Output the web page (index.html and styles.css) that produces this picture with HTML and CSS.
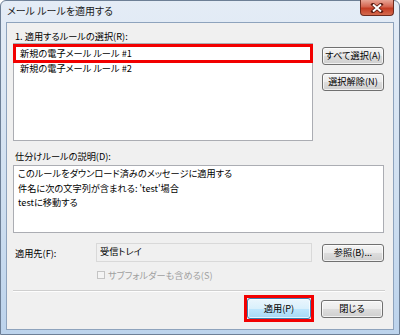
FILE: index.html
```html
<!DOCTYPE html>
<html lang="ja">
<head>
  <meta charset="UTF-8">
  <title>メール ルールを適用する</title>
  <link rel="stylesheet" href="styles.css">
</head>
<body>
  <div class="window">
    <div class="titlebar">
      <span class="title">メール ルールを適用する</span>
      <div class="close-btn">
        <svg width="14" height="10" viewBox="0 0 14 10">
          <path d="M3 1.5 L11 8.5 M11 1.5 L3 8.5" stroke="#5a1a10" stroke-width="3.6" stroke-linecap="square"/>
          <path d="M3 1.5 L11 8.5 M11 1.5 L3 8.5" stroke="#ffffff" stroke-width="2"/>
        </svg>
      </div>
    </div>
    <div class="client">
      <div class="label label-first">1. 適用するルールの選択(R):</div>
      <div class="rules-row">
        <div class="listbox">
          <div class="list-item">新規の電子メール ルール #1</div>
          <div class="list-item">新規の電子メール ルール #2</div>
          <div class="mark mark-rule"></div>
        </div>
        <div class="side-buttons">
          <div class="btn">すべて選択(A)</div>
          <div class="btn">選択解除(N)</div>
        </div>
      </div>

      <div class="label label-desc">仕分けルールの説明(D):</div>
      <div class="desc-box">
        <div>このルールをダウンロード済みのメッセージに適用する</div>
        <div>件名に次の文字列が含まれる: 'test'場合</div>
        <div>testに移動する</div>
      </div>

      <div class="dest-row">
        <div class="dest-label">適用先(F):</div>
        <div class="dest-field">受信トレイ</div>
        <div class="btn">参照(B)...</div>
      </div>
      <div class="check-row">
        <span class="checkbox"></span>
        <span>サブフォルダーも含める(S)</span>
      </div>

      <div class="separator"></div>

      <div class="footer">
        <div class="apply-wrap">
          <div class="btn btn-default">適用(P)</div>
          <div class="mark mark-apply"></div>
        </div>
        <div class="btn">閉じる</div>
      </div>
    </div>
  </div>
</body>
</html>
```

FILE: styles.css
```css
*{
  margin: 0;
  padding: 0;
  box-sizing: border-box;
}
body{
  width: 400px;
  height: 335px;
  overflow: hidden;
  font-family: "Noto Sans CJK JP", "Liberation Sans", sans-serif;
  font-size: 9.2px;
  font-feature-settings: "palt";
  color: #000;
  background: #fff;
}
.window{
  width: 400px;
  height: 335px;
  background: linear-gradient(#e4ecf6, #cfdff0 60%, #bcd3ec);
  border: 1px solid #6d7f96;
  border-radius: 6px 6px 0 0;
  display: flex;
  flex-direction: column;
}
.titlebar{
  height: 21px;
  display: flex;
  align-items: flex-start;
  justify-content: space-between;
  padding-left: 6px;
}
.title{
  line-height: 20px;
  font-size: 10px;
  color: #1b1b1b;
}
.close-btn{
  width: 34px;
  height: 16px;
  margin-right: 5px;
  margin-top: -1px;
  background: linear-gradient(#e8a596, #d5644f 45%, #c43c23 55%, #d46a4e);
  border: 1px solid #6e2b1f;
  border-top: none;
  border-radius: 0 0 4px 4px;
  display: flex;
  align-items: center;
  justify-content: center;
}
.client{
  margin: 0 5px 4px 5px;
  flex: 1;
  background: #f0f0f0;
  border: 1px solid #8ea3bd;
  padding: 6px 8px 0 6px;
  display: flex;
  flex-direction: column;
}
.label{
  line-height: 14px;
  padding-left: 2px;
}
.rules-row{
  display: flex;
}
.listbox{
  position: relative;
  width: 300px;
  height: 98px;
  background: #fff;
  border: 1px solid #abadb3;
  padding: 2px 0 0 6px;
}
.list-item{
  line-height: 15px;
}
.mark{
  position: absolute;
  border: 3px solid #f20000;
}
.mark-rule{
  left: -1px;
  top: 0px;
  width: 300px;
  height: 19px;
}
.side-buttons{
  margin-left: 9px;
  margin-top: 4px;
  display: flex;
  flex-direction: column;
  gap: 8px;
}
.btn{
  width: 62px;
  height: 18px;
  border: 1px solid #707070;
  border-radius: 3px;
  background: linear-gradient(#f4f4f4, #ebebeb 50%, #dddddd 51%, #cfcfcf);
  box-shadow: inset 0 0 0 1px rgba(255,255,255,0.7);
  display: flex;
  align-items: center;
  justify-content: center;
  line-height: 1;
  white-space: nowrap;
}
.label-desc{
  margin-top: 8px;
}
.desc-box{
  margin-top: 2px;
  width: 371px;
  height: 68px;
  background: #fff;
  border: 1px solid #abadb3;
  padding: 0 0 0 4px;
  line-height: 14.5px;
}
.dest-row{
  margin-top: 10px;
  display: flex;
  align-items: center;
}
.dest-label{
  width: 83px;
  padding-left: 2px;
}
.dest-field{
  width: 216px;
  height: 19px;
  background: #f0f0f0;
  border: 1px solid #d9d9d9;
  padding: 0 0 0 3px;
  line-height: 14px;
}
.dest-row .btn{
  margin-left: 10px;
}
.check-row{
  margin-top: 6px;
  margin-left: 84px;
  display: flex;
  align-items: center;
  gap: 3px;
  color: #a0a0a0;
  line-height: 14px;
}
.checkbox{
  width: 8px;
  height: 8px;
  border: 1px solid #c4c4c4;
  background: #f4f4f4;
}
.separator{
  margin-top: 8px;
  width: 372px;
  border-top: 1px solid #cfcfcf;
  border-bottom: 1px solid #fdfdfd;
}
.footer{
  display: flex;
  justify-content: flex-end;
  align-items: center;
  gap: 7px;
  margin-top: 3px;
  padding-right: 2px;
}
.apply-wrap{
  position: relative;
  padding: 3px;
}
.btn-default{
  width: 64px;
  height: 21px;
  border-color: #3c7fb1;
  background: linear-gradient(#eaf6fd, #d9f0fc 50%, #bee6fd 51%, #a7d9f5);
}
.mark-apply{
  left: 0;
  top: 0;
  right: 0;
  bottom: 0;
}
```
